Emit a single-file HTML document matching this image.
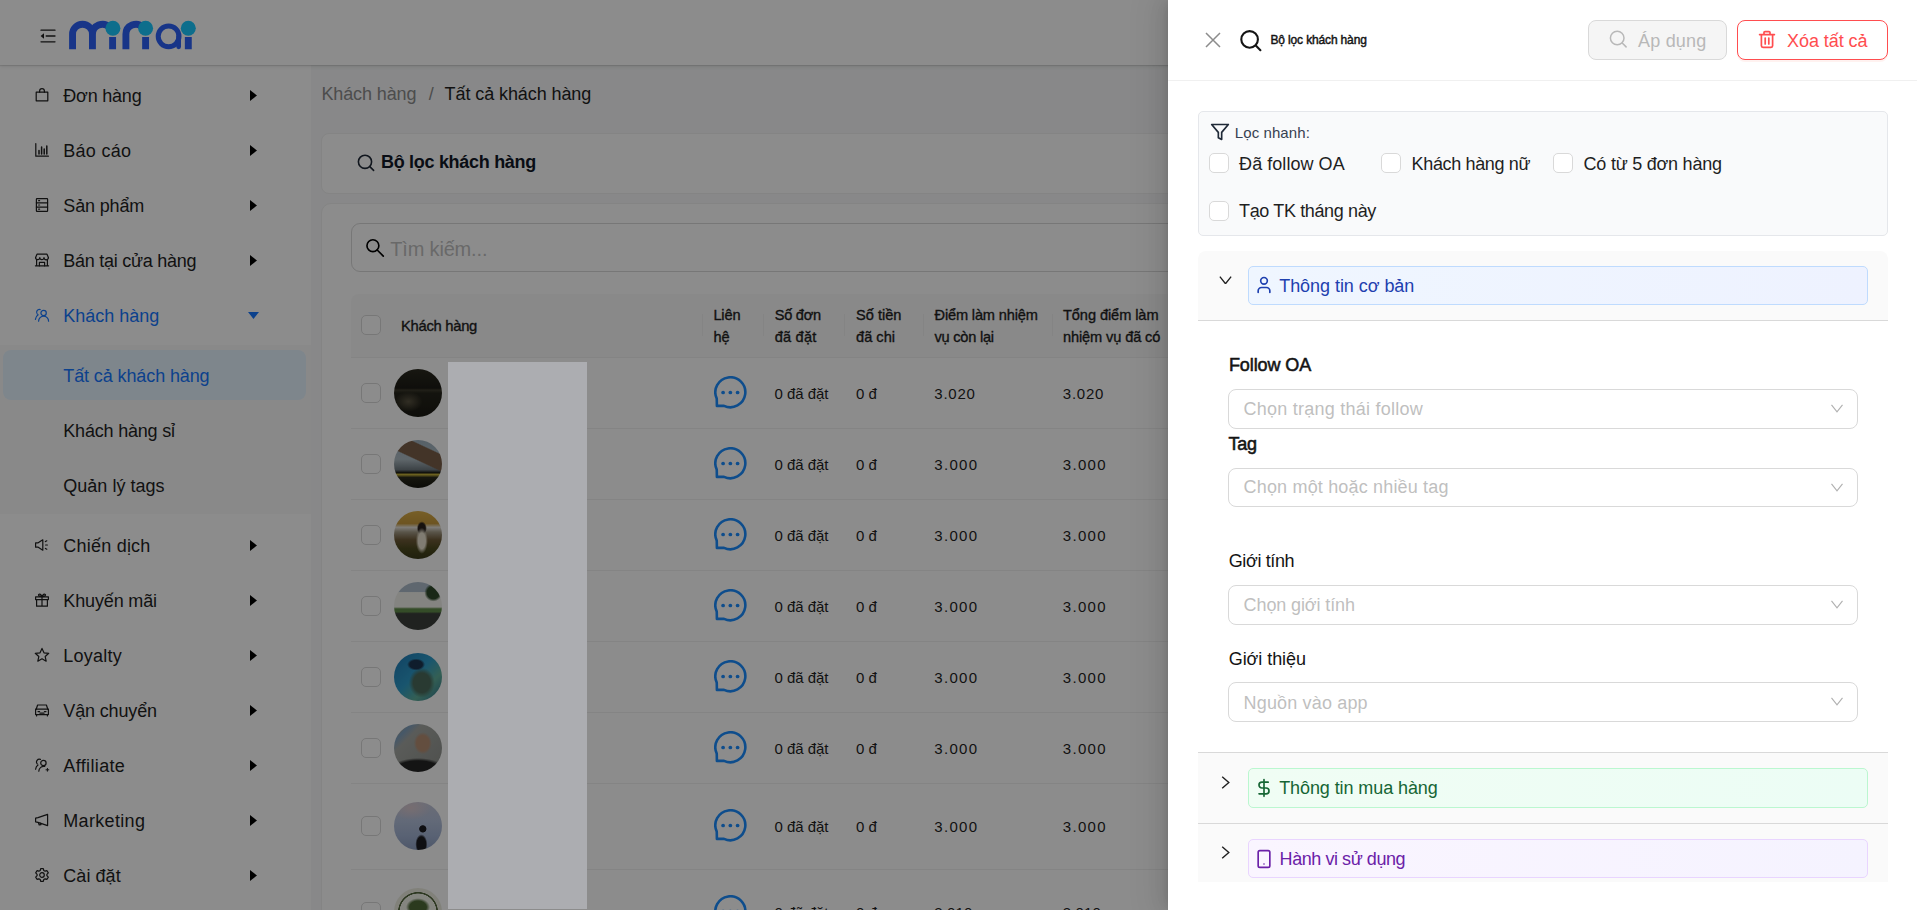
<!DOCTYPE html>
<html><head><meta charset="utf-8"><title>Khách hàng</title>
<style>
html,body{margin:0;padding:0}
body{width:1917px;height:910px;overflow:hidden;position:relative;background:#f7f8f9;font-family:'Liberation Sans',sans-serif}
.a{position:absolute}
.t{position:absolute;white-space:nowrap;font-family:'Liberation Sans',sans-serif}
.card{background:#fff;border-radius:8px;box-sizing:border-box;border:1px solid #f1f1f1}
.cb{box-sizing:border-box;border:1px solid #d9d9d9;border-radius:5px;background:#fff}
#app .cb{background:#fff}
</style></head><body>
<div id="app" class="a" style="left:0;top:0;width:1917px;height:910px;overflow:hidden">
<div class="a" style="left:0;top:65px;width:311px;height:845px;background:#fff"></div>
<div class="a" style="left:0;top:345px;width:311px;height:169px;background:#fafafa"></div>
<div class="a" style="left:3px;top:350px;width:303px;height:49.500px;border-radius:8px;background:#e6f4ff"></div>
<svg class="a" style="left:33.7px;top:87.3px" width="16" height="16" viewBox="0 0 16 16" fill="none" stroke="#1f1f1f" stroke-width="1.2" stroke-linecap="round" stroke-linejoin="round" ><path d="M2.2 5.2h11.6v8.6H2.2z"/><path d="M5.6 5.2V4a2.4 2.4 0 0 1 4.8 0v1.2"/></svg><svg class="a" style="left:249.600px;top:89.5px" width="7" height="11" viewBox="0 0 7 11"><path d="M0 0v11l7-5.500z" fill="#000"/></svg><span class="t" style="left:63.3px;top:86px;line-height:20px;font-size:18px;color:#1f1f1f;letter-spacing:-0.21px;">Đơn hàng</span><svg class="a" style="left:33.7px;top:142.3px" width="16" height="16" viewBox="0 0 16 16" fill="none" stroke="#1f1f1f" stroke-width="1.2" stroke-linecap="round" stroke-linejoin="round" ><path d="M1.8 1.6v12.6h12.6"/><path d="M5 12V8.6M7.6 12V5M10.2 12V7M12.8 12V4" stroke-width="1.5"/></svg><svg class="a" style="left:249.600px;top:144.5px" width="7" height="11" viewBox="0 0 7 11"><path d="M0 0v11l7-5.500z" fill="#000"/></svg><span class="t" style="left:63.3px;top:141px;line-height:20px;font-size:18px;color:#1f1f1f;letter-spacing:0.27px;">Báo cáo</span><svg class="a" style="left:33.7px;top:197.3px" width="16" height="16" viewBox="0 0 16 16" fill="none" stroke="#1f1f1f" stroke-width="1.2" stroke-linecap="round" stroke-linejoin="round" ><rect x="2.4" y="1.6" width="11.2" height="12.8" rx=".6"/><path d="M2.4 5.8h11.2M2.4 10.1h11.2"/><path d="M4.6 3.7h1M4.6 8h1M4.6 12.2h1"/></svg><svg class="a" style="left:249.600px;top:199.5px" width="7" height="11" viewBox="0 0 7 11"><path d="M0 0v11l7-5.500z" fill="#000"/></svg><span class="t" style="left:63.3px;top:196px;line-height:20px;font-size:18px;color:#1f1f1f;letter-spacing:-0.15px;">Sản phẩm</span><svg class="a" style="left:33.7px;top:252.3px" width="16" height="16" viewBox="0 0 16 16" fill="none" stroke="#1f1f1f" stroke-width="1.2" stroke-linecap="round" stroke-linejoin="round" ><path d="M1.6 5.6 3 2.2h10l1.4 3.4"/><path d="M1.6 5.6a2.1 2.1 0 0 0 4.2 0 2.1 2.1 0 0 0 4.2 0 2.1 2.1 0 0 0 4.4 0"/><path d="M2.6 7.6v6.2h10.8V7.6M1.4 13.8h13.2"/><path d="M5.4 13.8v-3.4h5.2v3.4"/></svg><svg class="a" style="left:249.600px;top:254.5px" width="7" height="11" viewBox="0 0 7 11"><path d="M0 0v11l7-5.500z" fill="#000"/></svg><span class="t" style="left:63.3px;top:251px;line-height:20px;font-size:18px;color:#1f1f1f;letter-spacing:-0.26px;">Bán tại cửa hàng</span><svg class="a" style="left:33.7px;top:307.3px" width="16" height="16" viewBox="0 0 16 16" fill="none" stroke="#1677ff" stroke-width="1.2" stroke-linecap="round" stroke-linejoin="round" ><circle cx="9.6" cy="6" r="2.7"/><path d="M4.6 14.2a5 5 0 0 1 10 0"/><path d="M6.2 2.6a2.8 2.8 0 0 0-3 4.4M1.4 12.4c.2-2 1.2-3.6 2.8-4.6"/></svg><svg class="a" style="left:247.5px;top:312px" width="11" height="7" viewBox="0 0 11 7"><path d="M0 0h11L5.500 7z" fill="#1677ff"/></svg><span class="t" style="left:63.3px;top:306px;line-height:20px;font-size:18px;color:#1677ff;letter-spacing:-0.01px;">Khách hàng</span><span class="t" style="left:63.3px;top:366px;line-height:20px;font-size:18px;color:#1677ff;letter-spacing:-0.11px;">Tất cả khách hàng</span><span class="t" style="left:63.3px;top:421px;line-height:20px;font-size:18px;color:#1f1f1f;letter-spacing:-0.20px;">Khách hàng sỉ</span><span class="t" style="left:63.3px;top:476px;line-height:20px;font-size:18px;color:#1f1f1f;letter-spacing:0.01px;">Quản lý tags</span><svg class="a" style="left:33.7px;top:537.3px" width="16" height="16" viewBox="0 0 16 16" fill="none" stroke="#1f1f1f" stroke-width="1.2" stroke-linecap="round" stroke-linejoin="round" ><path d="M1.6 5.8h2.6l4.6-3v10.4l-4.6-3H1.6z"/><path d="M11.4 4.6l1.4-.8M11.6 8h1.8M11.4 11.4l1.4.8"/></svg><svg class="a" style="left:249.600px;top:539.5px" width="7" height="11" viewBox="0 0 7 11"><path d="M0 0v11l7-5.500z" fill="#000"/></svg><span class="t" style="left:63.3px;top:536px;line-height:20px;font-size:18px;color:#1f1f1f;letter-spacing:0.22px;">Chiến dịch</span><svg class="a" style="left:33.7px;top:592.3px" width="16" height="16" viewBox="0 0 16 16" fill="none" stroke="#1f1f1f" stroke-width="1.2" stroke-linecap="round" stroke-linejoin="round" ><path d="M2.6 7.6v6.6h10.8V7.6M1.6 4.8h12.8v2.8H1.6zM8 4.8v9.4"/><path d="M8 4.6C7 2.4 5.6 1.6 4.8 2.4s0 2.2 3.2 2.2c3.2 0 4-1.400 3.200-2.200S9 2.400 8 4.600z"/></svg><svg class="a" style="left:249.600px;top:594.5px" width="7" height="11" viewBox="0 0 7 11"><path d="M0 0v11l7-5.500z" fill="#000"/></svg><span class="t" style="left:63.3px;top:591px;line-height:20px;font-size:18px;color:#1f1f1f;letter-spacing:-0.14px;">Khuyến mãi</span><svg class="a" style="left:33.7px;top:647.3px" width="16" height="16" viewBox="0 0 16 16" fill="none" stroke="#1f1f1f" stroke-width="1.2" stroke-linecap="round" stroke-linejoin="round" ><path d="M8.00 1.40 L9.97 5.79 L14.75 6.31 L11.19 9.54 L12.17 14.24 L8.00 11.85 L3.83 14.24 L4.81 9.54 L1.25 6.31 L6.03 5.79z"/></svg><svg class="a" style="left:249.600px;top:649.5px" width="7" height="11" viewBox="0 0 7 11"><path d="M0 0v11l7-5.500z" fill="#000"/></svg><span class="t" style="left:63.3px;top:646px;line-height:20px;font-size:18px;color:#1f1f1f;letter-spacing:0.23px;">Loyalty</span><svg class="a" style="left:33.7px;top:702.3px" width="16" height="16" viewBox="0 0 16 16" fill="none" stroke="#1f1f1f" stroke-width="1.2" stroke-linecap="round" stroke-linejoin="round" ><path d="M2.200 7.200 3.600 3h8.800l1.400 4.200"/><path d="M1.600 7.200h12.800v5.400H1.600zM2.600 12.600v1.400M13.400 12.600v1.400"/><path d="M4 9.600h1.600M10.400 9.600H12M6 11.200h4"/></svg><svg class="a" style="left:249.600px;top:704.5px" width="7" height="11" viewBox="0 0 7 11"><path d="M0 0v11l7-5.500z" fill="#000"/></svg><span class="t" style="left:63.3px;top:701px;line-height:20px;font-size:18px;color:#1f1f1f;letter-spacing:-0.15px;">Vận chuyển</span><svg class="a" style="left:33.7px;top:757.3px" width="16" height="16" viewBox="0 0 16 16" fill="none" stroke="#1f1f1f" stroke-width="1.2" stroke-linecap="round" stroke-linejoin="round" ><circle cx="9.400" cy="6" r="2.700"/><path d="M4.800 14.200a5 5 0 0 1 6-4.800"/><path d="M6.400 2.400a2.800 2.800 0 0 0-3.200 4.400M1.600 12.200c.2-1.800 1-3.200 2.400-4.200"/><path d="M13.400 11.400v2.800M12 12.800h2.800" stroke-width="1"/></svg><svg class="a" style="left:249.600px;top:759.5px" width="7" height="11" viewBox="0 0 7 11"><path d="M0 0v11l7-5.500z" fill="#000"/></svg><span class="t" style="left:63.3px;top:756px;line-height:20px;font-size:18px;color:#1f1f1f;letter-spacing:0.36px;">Affiliate</span><svg class="a" style="left:33.7px;top:812.3px" width="16" height="16" viewBox="0 0 16 16" fill="none" stroke="#1f1f1f" stroke-width="1.2" stroke-linecap="round" stroke-linejoin="round" ><path d="M1.600 6.200v3.600l2.400.6 9.600 3.200V2.400L4 5.600z"/><path d="M4.400 10.600l.8 2.400 1.800-.4-.6-1.400"/></svg><svg class="a" style="left:249.600px;top:814.5px" width="7" height="11" viewBox="0 0 7 11"><path d="M0 0v11l7-5.500z" fill="#000"/></svg><span class="t" style="left:63.3px;top:811px;line-height:20px;font-size:18px;color:#1f1f1f;letter-spacing:0.32px;">Marketing</span><svg class="a" style="left:33.7px;top:867.3px" width="16" height="16" viewBox="0 0 16 16" fill="none" stroke="#1f1f1f" stroke-width="1.2" stroke-linecap="round" stroke-linejoin="round" ><circle cx="8" cy="8" r="2.300"/><path d="M6.700 1.600h2.600l.5 1.900 1.300.7 1.900-.5 1.300 2.200-1.400 1.400v1.400l1.400 1.400-1.300 2.200-1.900-.5-1.300.7-.5 1.900H6.700l-.5-1.900-1.300-.7-1.900.5-1.300-2.200 1.400-1.400V7.300L1.700 5.900 3 3.700l1.900.5 1.300-.7z"/></svg><svg class="a" style="left:249.600px;top:869.5px" width="7" height="11" viewBox="0 0 7 11"><path d="M0 0v11l7-5.500z" fill="#000"/></svg><span class="t" style="left:63.3px;top:866px;line-height:20px;font-size:18px;color:#1f1f1f;letter-spacing:0.06px;">Cài đặt</span>
<span class="t" style="left:321.4px;top:84px;line-height:20px;font-size:18px;color:#8c8c8c;letter-spacing:-0.11px;">Khách hàng</span><span class="t" style="left:428.8px;top:84px;line-height:20px;font-size:18px;color:#8c8c8c;">/</span><span class="t" style="left:444.6px;top:84px;line-height:20px;font-size:18px;color:#1f1f1f;letter-spacing:-0.09px;">Tất cả khách hàng</span><div class="a card" style="left:321px;top:133px;width:1000px;height:60.700px"></div><svg class="a" style="left:356px;top:153px" width="19" height="19" viewBox="0 0 19 19" fill="none" stroke="#1f2937" stroke-width="1.6" stroke-linecap="round" stroke-linejoin="round" ><circle cx="9" cy="8.800" r="6.600"/><path d="M13.800 13.600l3.800 3.800"/></svg><span class="t" style="left:381.0px;top:152px;line-height:20px;font-size:18px;color:#111827;font-weight:700;letter-spacing:-0.30px;">Bộ lọc khách hàng</span><div class="a card" style="left:321px;top:203px;width:1000px;height:800px;border-radius:10px"></div><div class="a" style="left:351px;top:223px;width:900px;height:48.500px;border:1px solid #d9d9d9;border-radius:9px;box-sizing:border-box;background:#fff"></div><svg class="a" style="left:365px;top:238px" width="20" height="20" viewBox="0 0 20 20" fill="none" stroke="#000" stroke-width="1.65" stroke-linecap="round" stroke-linejoin="round" ><circle cx="7.900" cy="7.700" r="5.950"/><path d="M12.200 12l6.100 6.100"/></svg><span class="t" style="left:390.2px;top:238px;line-height:22px;font-size:20px;color:#bfbfbf;letter-spacing:-0.16px;">Tìm kiếm...</span><div class="a" style="left:351px;top:293.500px;width:900px;height:63.500px;background:#fafafa;border-radius:8px 0 0 0;border-bottom:1px solid #f0f0f0"></div><div class="a cb" style="left:361px;top:315px;width:20px;height:20px"></div><span class="t" style="left:401.0px;top:318px;line-height:16px;font-size:14.8px;color:#1f1f1f;letter-spacing:-0.30px;-webkit-text-stroke:.35px #1f1f1f;">Khách hàng</span><span class="t" style="left:713.4px;top:307px;line-height:16px;font-size:14.6px;color:#1f1f1f;letter-spacing:-0.16px;-webkit-text-stroke:.35px #1f1f1f;">Liên</span><span class="t" style="left:713.4px;top:329px;line-height:16px;font-size:14.6px;color:#1f1f1f;letter-spacing:0.07px;-webkit-text-stroke:.35px #1f1f1f;">hệ</span><span class="t" style="left:774.8px;top:307px;line-height:16px;font-size:14.6px;color:#1f1f1f;letter-spacing:-0.28px;-webkit-text-stroke:.35px #1f1f1f;">Số đơn</span><span class="t" style="left:774.8px;top:329px;line-height:16px;font-size:14.6px;color:#1f1f1f;letter-spacing:0.18px;-webkit-text-stroke:.35px #1f1f1f;">đã đặt</span><span class="t" style="left:856.1px;top:307px;line-height:16px;font-size:14.6px;color:#1f1f1f;letter-spacing:-0.01px;-webkit-text-stroke:.35px #1f1f1f;">Số tiền</span><span class="t" style="left:856.1px;top:329px;line-height:16px;font-size:14.6px;color:#1f1f1f;letter-spacing:-0.01px;-webkit-text-stroke:.35px #1f1f1f;">đã chi</span><span class="t" style="left:934.5px;top:307px;line-height:16px;font-size:14.6px;color:#1f1f1f;letter-spacing:-0.16px;-webkit-text-stroke:.35px #1f1f1f;">Điểm làm nhiệm</span><span class="t" style="left:934.5px;top:329px;line-height:16px;font-size:14.6px;color:#1f1f1f;letter-spacing:-0.23px;-webkit-text-stroke:.35px #1f1f1f;">vụ còn lại</span><span class="t" style="left:1063.0px;top:307px;line-height:16px;font-size:14.6px;color:#1f1f1f;letter-spacing:-0.08px;-webkit-text-stroke:.35px #1f1f1f;">Tổng điểm làm</span><span class="t" style="left:1063.0px;top:329px;line-height:16px;font-size:14.6px;color:#1f1f1f;letter-spacing:-0.12px;-webkit-text-stroke:.35px #1f1f1f;">nhiệm vụ đã có</span><div class="a" style="left:702.0px;top:314px;width:1px;height:22px;background:#f0f0f0"></div><div class="a" style="left:762.9px;top:314px;width:1px;height:22px;background:#f0f0f0"></div><div class="a" style="left:844.0px;top:314px;width:1px;height:22px;background:#f0f0f0"></div><div class="a" style="left:922.8px;top:314px;width:1px;height:22px;background:#f0f0f0"></div><div class="a" style="left:1051.8px;top:314px;width:1px;height:22px;background:#f0f0f0"></div><div class="a cb" style="left:361px;top:383px;width:20px;height:20px"></div><div class="a" style="left:394px;top:369px;width:48px;height:48px;border-radius:50%;background:radial-gradient(ellipse 14px 10px at 30% 68%,#5a5442 0,transparent 100%),linear-gradient(180deg,#2b2a20 0,#1c1b15 40%,#3d3a2c 44%,#25241b 50%,#1a1912 100%)"></div><svg class="a" style="left:714.3px;top:376.2px" width="32.7" height="32.7" viewBox="0 0 32.700 32.700" fill="none" stroke="#1a8cff" stroke-width="2.6" stroke-linecap="round" stroke-linejoin="round" ><path d="M2.750 22.600A15 15 0 1 1 10 29.850L2.900 29.900z" stroke-width="2.600"/><g fill="#1a8cff" stroke="none"><circle cx="9.100" cy="16.500" r="1.850"/><circle cx="16.350" cy="16.500" r="1.850"/><circle cx="23.600" cy="16.500" r="1.850"/></g></svg><span class="t" style="left:774.6px;top:385px;line-height:17px;font-size:15px;color:#1f1f1f;letter-spacing:-0.06px;">0 đã đặt</span><span class="t" style="left:856.0px;top:385px;line-height:17px;font-size:15px;color:#1f1f1f;letter-spacing:-0.03px;">0 đ</span><span class="t" style="left:934.3px;top:385px;line-height:17px;font-size:15px;color:#1f1f1f;letter-spacing:0.76px;">3.020</span><span class="t" style="left:1062.8px;top:385px;line-height:17px;font-size:15px;color:#1f1f1f;letter-spacing:0.76px;">3.020</span><div class="a cb" style="left:361px;top:454px;width:20px;height:20px"></div><div class="a" style="left:394px;top:440px;width:48px;height:48px;border-radius:50%;background:linear-gradient(205deg,transparent 0 20%,#7a5f4a 22% 44%,transparent 46%),linear-gradient(180deg,#9db0bd 0,#aebcc4 40%,#6f7a80 62%,#1d1d16 68%,#c9b53a 72%,#2a2a1c 78%,#16160f 100%)"></div><svg class="a" style="left:714.3px;top:447.2px" width="32.7" height="32.7" viewBox="0 0 32.700 32.700" fill="none" stroke="#1a8cff" stroke-width="2.6" stroke-linecap="round" stroke-linejoin="round" ><path d="M2.750 22.600A15 15 0 1 1 10 29.850L2.900 29.900z" stroke-width="2.600"/><g fill="#1a8cff" stroke="none"><circle cx="9.100" cy="16.500" r="1.850"/><circle cx="16.350" cy="16.500" r="1.850"/><circle cx="23.600" cy="16.500" r="1.850"/></g></svg><span class="t" style="left:774.6px;top:456px;line-height:17px;font-size:15px;color:#1f1f1f;letter-spacing:-0.06px;">0 đã đặt</span><span class="t" style="left:856.0px;top:456px;line-height:17px;font-size:15px;color:#1f1f1f;letter-spacing:-0.03px;">0 đ</span><span class="t" style="left:934.3px;top:456px;line-height:17px;font-size:15px;color:#1f1f1f;letter-spacing:1.31px;">3.000</span><span class="t" style="left:1062.8px;top:456px;line-height:17px;font-size:15px;color:#1f1f1f;letter-spacing:1.31px;">3.000</span><div class="a cb" style="left:361px;top:525px;width:20px;height:20px"></div><div class="a" style="left:394px;top:511px;width:48px;height:48px;border-radius:50%;background:radial-gradient(ellipse 6px 13px at 58% 62%,#e9e2cf 0 60%,transparent 100%),radial-gradient(ellipse 5px 7px at 58% 36%,#2a221c 0 70%,transparent 100%),linear-gradient(180deg,#d9ad48 0,#c79a3d 26%,#e6e2da 34%,#a39a86 44%,#6e5a38 60%,#4c4a1f 78%,#3a3a1a 100%)"></div><svg class="a" style="left:714.3px;top:518.2px" width="32.7" height="32.7" viewBox="0 0 32.700 32.700" fill="none" stroke="#1a8cff" stroke-width="2.6" stroke-linecap="round" stroke-linejoin="round" ><path d="M2.750 22.600A15 15 0 1 1 10 29.850L2.900 29.900z" stroke-width="2.600"/><g fill="#1a8cff" stroke="none"><circle cx="9.100" cy="16.500" r="1.850"/><circle cx="16.350" cy="16.500" r="1.850"/><circle cx="23.600" cy="16.500" r="1.850"/></g></svg><span class="t" style="left:774.6px;top:527px;line-height:17px;font-size:15px;color:#1f1f1f;letter-spacing:-0.06px;">0 đã đặt</span><span class="t" style="left:856.0px;top:527px;line-height:17px;font-size:15px;color:#1f1f1f;letter-spacing:-0.03px;">0 đ</span><span class="t" style="left:934.3px;top:527px;line-height:17px;font-size:15px;color:#1f1f1f;letter-spacing:1.31px;">3.000</span><span class="t" style="left:1062.8px;top:527px;line-height:17px;font-size:15px;color:#1f1f1f;letter-spacing:1.31px;">3.000</span><div class="a cb" style="left:361px;top:596px;width:20px;height:20px"></div><div class="a" style="left:394px;top:582px;width:48px;height:48px;border-radius:50%;background:radial-gradient(ellipse 9px 9px at 82% 22%,#2e4a2a 0 70%,transparent 100%),linear-gradient(180deg,#aebccb 0 20%,#f1f1ec 22% 52%,#5f8a49 56% 62%,#3b3e3b 66% 100%)"></div><svg class="a" style="left:714.3px;top:589.2px" width="32.7" height="32.7" viewBox="0 0 32.700 32.700" fill="none" stroke="#1a8cff" stroke-width="2.6" stroke-linecap="round" stroke-linejoin="round" ><path d="M2.750 22.600A15 15 0 1 1 10 29.850L2.900 29.900z" stroke-width="2.600"/><g fill="#1a8cff" stroke="none"><circle cx="9.100" cy="16.500" r="1.850"/><circle cx="16.350" cy="16.500" r="1.850"/><circle cx="23.600" cy="16.500" r="1.850"/></g></svg><span class="t" style="left:774.6px;top:598px;line-height:17px;font-size:15px;color:#1f1f1f;letter-spacing:-0.06px;">0 đã đặt</span><span class="t" style="left:856.0px;top:598px;line-height:17px;font-size:15px;color:#1f1f1f;letter-spacing:-0.03px;">0 đ</span><span class="t" style="left:934.3px;top:598px;line-height:17px;font-size:15px;color:#1f1f1f;letter-spacing:1.31px;">3.000</span><span class="t" style="left:1062.8px;top:598px;line-height:17px;font-size:15px;color:#1f1f1f;letter-spacing:1.31px;">3.000</span><div class="a cb" style="left:361px;top:667px;width:20px;height:20px"></div><div class="a" style="left:394px;top:653px;width:48px;height:48px;border-radius:50%;background:radial-gradient(ellipse 9px 6px at 46% 24%,#1d3550 0 70%,transparent 100%),radial-gradient(ellipse 13px 15px at 58% 62%,#4b6a5c 0 65%,transparent 100%),linear-gradient(135deg,#1f78b4 0,#2e9cc9 45%,#5fae9a 70%,#2a6f8c 100%)"></div><svg class="a" style="left:714.3px;top:660.2px" width="32.7" height="32.7" viewBox="0 0 32.700 32.700" fill="none" stroke="#1a8cff" stroke-width="2.6" stroke-linecap="round" stroke-linejoin="round" ><path d="M2.750 22.600A15 15 0 1 1 10 29.850L2.900 29.900z" stroke-width="2.600"/><g fill="#1a8cff" stroke="none"><circle cx="9.100" cy="16.500" r="1.850"/><circle cx="16.350" cy="16.500" r="1.850"/><circle cx="23.600" cy="16.500" r="1.850"/></g></svg><span class="t" style="left:774.6px;top:669px;line-height:17px;font-size:15px;color:#1f1f1f;letter-spacing:-0.06px;">0 đã đặt</span><span class="t" style="left:856.0px;top:669px;line-height:17px;font-size:15px;color:#1f1f1f;letter-spacing:-0.03px;">0 đ</span><span class="t" style="left:934.3px;top:669px;line-height:17px;font-size:15px;color:#1f1f1f;letter-spacing:1.31px;">3.000</span><span class="t" style="left:1062.8px;top:669px;line-height:17px;font-size:15px;color:#1f1f1f;letter-spacing:1.31px;">3.000</span><div class="a cb" style="left:361px;top:738px;width:20px;height:20px"></div><div class="a" style="left:394px;top:724px;width:48px;height:48px;border-radius:50%;background:radial-gradient(ellipse 9px 11px at 60% 40%,#b58e74 0 70%,transparent 100%),radial-gradient(ellipse 30px 14px at 50% 100%,#252525 0 80%,transparent 100%),linear-gradient(135deg,#d9a441 0,#7fa0c0 18%,#a4a7a2 30%,#8e918d 100%)"></div><svg class="a" style="left:714.3px;top:731.2px" width="32.7" height="32.7" viewBox="0 0 32.700 32.700" fill="none" stroke="#1a8cff" stroke-width="2.6" stroke-linecap="round" stroke-linejoin="round" ><path d="M2.750 22.600A15 15 0 1 1 10 29.850L2.900 29.900z" stroke-width="2.600"/><g fill="#1a8cff" stroke="none"><circle cx="9.100" cy="16.500" r="1.850"/><circle cx="16.350" cy="16.500" r="1.850"/><circle cx="23.600" cy="16.500" r="1.850"/></g></svg><span class="t" style="left:774.6px;top:740px;line-height:17px;font-size:15px;color:#1f1f1f;letter-spacing:-0.06px;">0 đã đặt</span><span class="t" style="left:856.0px;top:740px;line-height:17px;font-size:15px;color:#1f1f1f;letter-spacing:-0.03px;">0 đ</span><span class="t" style="left:934.3px;top:740px;line-height:17px;font-size:15px;color:#1f1f1f;letter-spacing:1.31px;">3.000</span><span class="t" style="left:1062.8px;top:740px;line-height:17px;font-size:15px;color:#1f1f1f;letter-spacing:1.31px;">3.000</span><div class="a cb" style="left:361px;top:816px;width:20px;height:20px"></div><div class="a" style="left:394px;top:802px;width:48px;height:48px;border-radius:50%;background:radial-gradient(circle 4px at 60% 56%,#1c1c22 0 80%,transparent 100%),radial-gradient(ellipse 6px 10px at 57% 88%,#1c1c22 0 75%,transparent 100%),radial-gradient(ellipse 20px 12px at 35% 12%,#d9c7cd 0,transparent 100%),linear-gradient(180deg,#c3c6d8 0,#b3c0da 40%,#a3b3d3 70%,#8e9fc0 100%)"></div><svg class="a" style="left:714.3px;top:809.2px" width="32.7" height="32.7" viewBox="0 0 32.700 32.700" fill="none" stroke="#1a8cff" stroke-width="2.6" stroke-linecap="round" stroke-linejoin="round" ><path d="M2.750 22.600A15 15 0 1 1 10 29.850L2.900 29.900z" stroke-width="2.600"/><g fill="#1a8cff" stroke="none"><circle cx="9.100" cy="16.500" r="1.850"/><circle cx="16.350" cy="16.500" r="1.850"/><circle cx="23.600" cy="16.500" r="1.850"/></g></svg><span class="t" style="left:774.6px;top:818px;line-height:17px;font-size:15px;color:#1f1f1f;letter-spacing:-0.06px;">0 đã đặt</span><span class="t" style="left:856.0px;top:818px;line-height:17px;font-size:15px;color:#1f1f1f;letter-spacing:-0.03px;">0 đ</span><span class="t" style="left:934.3px;top:818px;line-height:17px;font-size:15px;color:#1f1f1f;letter-spacing:1.31px;">3.000</span><span class="t" style="left:1062.8px;top:818px;line-height:17px;font-size:15px;color:#1f1f1f;letter-spacing:1.31px;">3.000</span><div class="a" style="left:351px;top:427.5px;width:900px;height:1px;background:#f0f0f0"></div><div class="a" style="left:351px;top:498.5px;width:900px;height:1px;background:#f0f0f0"></div><div class="a" style="left:351px;top:569.5px;width:900px;height:1px;background:#f0f0f0"></div><div class="a" style="left:351px;top:640.5px;width:900px;height:1px;background:#f0f0f0"></div><div class="a" style="left:351px;top:711.5px;width:900px;height:1px;background:#f0f0f0"></div><div class="a" style="left:351px;top:782.5px;width:900px;height:1px;background:#f0f0f0"></div><div class="a" style="left:351px;top:868.5px;width:900px;height:1px;background:#f0f0f0"></div><div class="a cb" style="left:361px;top:902px;width:20px;height:20px"></div><div class="a" style="left:394px;top:888px;width:48px;height:48px;border-radius:50%;background:radial-gradient(ellipse 12px 9px at 50% 40%,#4f6b38 0 70%,transparent 100%),radial-gradient(circle,#f1f2e8 0 18.200px,#55683f 18.700px 19.700px,#ebecdf 20.200px)"></div><svg class="a" style="left:714.3px;top:895.4px" width="32.7" height="32.7" viewBox="0 0 32.700 32.700" fill="none" stroke="#1a8cff" stroke-width="2.6" stroke-linecap="round" stroke-linejoin="round" ><path d="M2.750 22.600A15 15 0 1 1 10 29.850L2.900 29.900z" stroke-width="2.600"/><g fill="#1a8cff" stroke="none"><circle cx="9.100" cy="16.500" r="1.850"/><circle cx="16.350" cy="16.500" r="1.850"/><circle cx="23.600" cy="16.500" r="1.850"/></g></svg><span class="t" style="left:774.6px;top:904px;line-height:17px;font-size:15px;color:#1f1f1f;letter-spacing:-0.06px;">0 đã đặt</span><span class="t" style="left:856.0px;top:904px;line-height:17px;font-size:15px;color:#1f1f1f;letter-spacing:-0.03px;">0 đ</span><span class="t" style="left:934.3px;top:904px;line-height:17px;font-size:15px;color:#1f1f1f;letter-spacing:0.11px;">3.010</span><span class="t" style="left:1062.8px;top:904px;line-height:17px;font-size:15px;color:#1f1f1f;letter-spacing:0.11px;">3.010</span>
<div class="a" style="left:0;top:0;width:1917px;height:65px;background:#fff;box-shadow:0 1px 1px rgba(0,0,0,.10),0 2px 4px rgba(0,0,0,.08)"></div>
<svg class="a" style="left:39.7px;top:27.8px" width="16" height="16" viewBox="0 0 16 16" fill="none" stroke="#1f1f1f" stroke-width="1.3" stroke-linecap="round" stroke-linejoin="round" ><path d="M1 2.200h14M6.200 8h8.800M1 13.800h14" stroke-width="1.300"/><path d="M4 5.200v5.600L.6 8z" fill="#1f1f1f" stroke="none"/></svg>
<svg class="a" style="left:66px;top:18px" width="132" height="34" viewBox="66 18 132 34" fill="none">
<g stroke="#2c62f7" stroke-width="6.900" stroke-linecap="butt" stroke-linejoin="round" fill="none">
<path d="M72.550 49.200V34.200a9.950 9.950 0 0 1 19.900 0V49.200"/>
<path d="M92.450 34.200a9.950 9.950 0 0 1 17-7"/>
<path d="M125.900 49.200V34.200a9.950 9.950 0 0 1 17-7"/>
<path d="M112.600 37.100V49.200M145.600 37.100V49.200M188.300 37.100V49.200"/>
<circle cx="168.600" cy="36.300" r="10.400" stroke-width="5"/>
<path d="M178.650 36.300V46.800" stroke-linecap="round" stroke-width="4.700"/>
</g>
<g fill="#19c8ff"><circle cx="112.900" cy="28.200" r="7.500"/><circle cx="145.600" cy="28.200" r="7.500"/><circle cx="188.300" cy="28.200" r="7.500"/></g>
</svg>
</div>
<div class="a" style="left:0;top:0;width:1917px;height:910px;background:rgba(0,0,0,.45)"></div>
<div class="a" style="left:448.300px;top:361.500px;width:138.400px;height:547.500px;background:#acadb1"></div>
<div class="a" style="left:1168px;top:0;width:749px;height:910px;background:#fff;box-shadow:-6px 0 16px 0 rgba(0,0,0,.08),-3px 0 6px -4px rgba(0,0,0,.12),-9px 0 28px 8px rgba(0,0,0,.05)"></div>
<svg class="a" style="left:1205px;top:32px" width="16" height="16" viewBox="0 0 16 16"><path d="M1 1l14 14M15 1L1 15" stroke="#8c8c8c" stroke-width="1.500" fill="none"/></svg><svg class="a" style="left:1239px;top:29px" width="24" height="24" viewBox="0 0 24 24" fill="none" stroke="#141414" stroke-width="2.1" stroke-linecap="round" stroke-linejoin="round" ><circle cx="10.600" cy="10.400" r="8.300"/><path d="M16.800 16.600l4.600 4.600"/></svg><span class="t" style="left:1270.5px;top:33px;line-height:14px;font-size:12px;color:#141414;letter-spacing:-0.15px;-webkit-text-stroke:.45px #141414;">Bộ lọc khách hàng</span><div class="a" style="left:1588px;top:20px;width:139px;height:40px;box-sizing:border-box;border:1px solid #d9d9d9;border-radius:8px;background:#f5f5f5"></div><svg class="a" style="left:1608px;top:29px" width="20" height="20" viewBox="0 0 20 20" fill="none" stroke="#b8b8b8" stroke-width="1.5" stroke-linecap="round" stroke-linejoin="round" ><circle cx="9.200" cy="9" r="6.800"/><path d="M14.200 14l3.900 3.900"/></svg><span class="t" style="left:1638.0px;top:31px;line-height:20px;font-size:18px;color:#b8b8b8;letter-spacing:0.21px;">Áp dụng</span><div class="a" style="left:1737px;top:20px;width:151px;height:40px;box-sizing:border-box;border:1px solid #ff4d4f;border-radius:8px;background:#fff;box-shadow:0 2px 0 rgba(255,38,5,.06)"></div><svg class="a" style="left:1758px;top:29.5px" width="18" height="19" viewBox="0 0 18 19" fill="none" stroke="#ff4d4f" stroke-width="1.7" stroke-linecap="round" stroke-linejoin="round" ><path d="M1.600 4.600h14.800M6 4.400V2.600a1 1 0 0 1 1-1h4a1 1 0 0 1 1 1v1.800M3.400 4.800v11a1.600 1.600 0 0 0 1.600 1.600h8a1.600 1.600 0 0 0 1.600-1.600v-11M7.200 8v6M10.800 8v6"/></svg><span class="t" style="left:1787.0px;top:31px;line-height:20px;font-size:18px;color:#ff4d4f;letter-spacing:-0.06px;">Xóa tất cả</span><div class="a" style="left:1168px;top:80px;width:749px;height:1px;background:#f0f0f0"></div><div class="a" style="left:1198px;top:111px;width:690px;height:125px;box-sizing:border-box;border:1px solid #e5e7eb;border-radius:5px;background:#f9fafb"></div><svg class="a" style="left:1209.5px;top:122px" width="20" height="20" viewBox="0 0 24 24" fill="none" stroke="#1f2937" stroke-width="2" stroke-linecap="round" stroke-linejoin="round" ><path d="M22 3H2l8 9.460V19l4 2v-8.540z"/></svg><span class="t" style="left:1234.8px;top:124px;line-height:17px;font-size:15px;color:#374151;letter-spacing:0.09px;">Lọc nhanh:</span><div class="a cb" style="left:1209px;top:153px;width:20px;height:20px"></div><div class="a cb" style="left:1381px;top:153px;width:20px;height:20px"></div><div class="a cb" style="left:1553px;top:153px;width:20px;height:20px"></div><div class="a cb" style="left:1209px;top:201px;width:20px;height:20px"></div><span class="t" style="left:1239.1px;top:154px;line-height:20px;font-size:18px;color:#1f1f1f;letter-spacing:0.05px;">Đã follow OA</span><span class="t" style="left:1411.6px;top:154px;line-height:20px;font-size:18px;color:#1f1f1f;letter-spacing:-0.35px;">Khách hàng nữ</span><span class="t" style="left:1583.6px;top:154px;line-height:20px;font-size:18px;color:#1f1f1f;letter-spacing:-0.24px;">Có từ 5 đơn hàng</span><span class="t" style="left:1239.1px;top:201px;line-height:20px;font-size:18px;color:#1f1f1f;letter-spacing:-0.37px;">Tạo TK tháng này</span><div class="a" style="left:1198px;top:250.500px;width:690px;height:631.500px;border-radius:8px 8px 0 0;overflow:hidden;background:#fff"><div class="a" style="left:0;top:0;width:690px;height:69.500px;background:#fafafa;border-bottom:1px solid #d9d9d9"></div><div class="a" style="left:0;top:501.500px;width:690px;height:72px;box-sizing:border-box;background:#fafafa;border-top:1px solid #d9d9d9;border-bottom:1px solid #d9d9d9"></div><div class="a" style="left:0;top:573.500px;width:690px;height:60px;background:#fafafa"></div></div><svg class="a" style="left:1219px;top:275.6px" width="13" height="8.6" viewBox="0 0 12 8.400" fill="none"><path d="M.5 .6L6 7.600l5.500-7" stroke="#1f1f1f" stroke-width="1.3"/></svg><div class="a" style="left:1248px;top:266px;width:620px;height:39px;box-sizing:border-box;border:1px solid #bfdbfe;border-radius:5px;background:linear-gradient(90deg,#eff6ff,#eef2ff)"></div><svg class="a" style="left:1254px;top:275px" width="20" height="20" viewBox="0 0 24 24" fill="none" stroke="#1e40af" stroke-width="2" stroke-linecap="round" stroke-linejoin="round" ><circle cx="12" cy="7" r="4"/><path d="M19 21v-2a4 4 0 0 0-4-4H9a4 4 0 0 0-4 4v2"/></svg><span class="t" style="left:1279.2px;top:276px;line-height:20px;font-size:18px;color:#1e40af;letter-spacing:-0.05px;">Thông tin cơ bản</span><span class="t" style="left:1228.9px;top:355px;line-height:20px;font-size:18px;color:#141414;letter-spacing:-0.08px;-webkit-text-stroke:.55px #141414;">Follow OA</span><div class="a" style="left:1228px;top:389px;width:630px;height:40px;box-sizing:border-box;border:1px solid #d9d9d9;border-radius:8px;background:#fff"></div><svg class="a" style="left:1830.6px;top:404.0px" width="12" height="9" viewBox="0 0 12 8.400" fill="none"><path d="M.5 .6L6 7.600l5.500-7" stroke="#b0b0b0" stroke-width="1.15"/></svg><span class="t" style="left:1243.6px;top:399px;line-height:20px;font-size:18px;color:#bfbfbf;letter-spacing:0.24px;">Chọn trạng thái follow</span><span class="t" style="left:1228.4px;top:434px;line-height:20px;font-size:18px;color:#141414;letter-spacing:-0.22px;-webkit-text-stroke:.55px #141414;">Tag</span><div class="a" style="left:1228px;top:468px;width:630px;height:39px;box-sizing:border-box;border:1px solid #d9d9d9;border-radius:8px;background:#fff"></div><svg class="a" style="left:1830.6px;top:482.59999999999997px" width="12" height="9" viewBox="0 0 12 8.400" fill="none"><path d="M.5 .6L6 7.600l5.500-7" stroke="#b0b0b0" stroke-width="1.15"/></svg><span class="t" style="left:1243.6px;top:477px;line-height:20px;font-size:18px;color:#bfbfbf;letter-spacing:0.17px;">Chọn một hoặc nhiều tag</span><span class="t" style="left:1228.7px;top:551px;line-height:20px;font-size:18px;color:#141414;letter-spacing:-0.37px;">Giới tính</span><div class="a" style="left:1228px;top:585px;width:630px;height:40px;box-sizing:border-box;border:1px solid #d9d9d9;border-radius:8px;background:#fff"></div><svg class="a" style="left:1830.6px;top:600.0px" width="12" height="9" viewBox="0 0 12 8.400" fill="none"><path d="M.5 .6L6 7.600l5.500-7" stroke="#b0b0b0" stroke-width="1.15"/></svg><span class="t" style="left:1243.6px;top:595px;line-height:20px;font-size:18px;color:#bfbfbf;letter-spacing:-0.11px;">Chọn giới tính</span><span class="t" style="left:1228.7px;top:649px;line-height:20px;font-size:18px;color:#141414;letter-spacing:-0.06px;">Giới thiệu</span><div class="a" style="left:1228px;top:682px;width:630px;height:40px;box-sizing:border-box;border:1px solid #d9d9d9;border-radius:8px;background:#fff"></div><svg class="a" style="left:1830.6px;top:697.2px" width="12" height="9" viewBox="0 0 12 8.400" fill="none"><path d="M.5 .6L6 7.600l5.500-7" stroke="#b0b0b0" stroke-width="1.15"/></svg><span class="t" style="left:1243.6px;top:693px;line-height:20px;font-size:18px;color:#bfbfbf;letter-spacing:0.16px;">Nguồn vào app</span><svg class="a" style="left:1220.7px;top:775.7px" width="9" height="13" viewBox="0 0 9 13" fill="none"><path d="M1.200.8L7.800 6.500 1.200 12.200" stroke="#1f1f1f" stroke-width="1.400"/></svg><div class="a" style="left:1248px;top:768px;width:620px;height:40px;box-sizing:border-box;border:1px solid #bbf7d0;border-radius:5px;background:linear-gradient(90deg,#f0fdf4,#ecfdf5)"></div><svg class="a" style="left:1254px;top:778px" width="20" height="20" viewBox="0 0 24 24" fill="none" stroke="#166534" stroke-width="2" stroke-linecap="round" stroke-linejoin="round" ><path d="M12 2v20"/><path d="M17 5H9.500a3.500 3.500 0 0 0 0 7h5a3.500 3.500 0 0 1 0 7H6"/></svg><span class="t" style="left:1279.2px;top:778px;line-height:20px;font-size:18px;color:#166534;letter-spacing:-0.09px;">Thông tin mua hàng</span><svg class="a" style="left:1220.7px;top:846px" width="9" height="13" viewBox="0 0 9 13" fill="none"><path d="M1.200.8L7.800 6.500 1.200 12.200" stroke="#1f1f1f" stroke-width="1.400"/></svg><div class="a" style="left:1248px;top:839px;width:620px;height:39px;box-sizing:border-box;border:1px solid #e9d5ff;border-radius:5px;background:linear-gradient(90deg,#faf5ff,#f5f3ff)"></div><svg class="a" style="left:1254px;top:849px" width="20" height="20" viewBox="0 0 24 24" fill="none" stroke="#6b21a8" stroke-width="2" stroke-linecap="round" stroke-linejoin="round" ><rect x="5" y="2" width="14" height="20" rx="2"/><path d="M12 18h.01"/></svg><span class="t" style="left:1279.6px;top:849px;line-height:20px;font-size:18px;color:#6b21a8;letter-spacing:-0.44px;">Hành vi sử dụng</span>
</body></html>
